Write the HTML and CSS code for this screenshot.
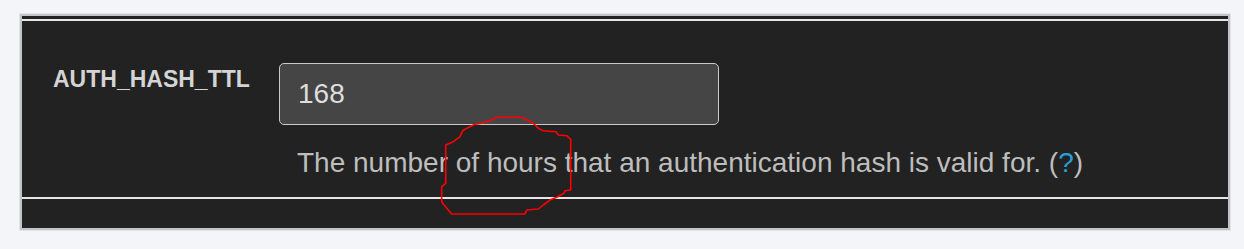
FILE: index.html
```html
<!DOCTYPE html>
<html lang="en">
<head>
<meta charset="utf-8">
<title>AUTH_HASH_TTL</title>
<link rel="stylesheet" href="styles.css">
</head>
<body>
<div class="panel">
  <div class="row">
    <label class="label" for="ttl">AUTH_HASH_TTL</label>
    <div class="field">
      <input id="ttl" class="input" type="text" value="168">
      <p class="help">The number of hours that an authentication hash is valid for. (<a class="link" href="#">?</a>)</p>
    </div>
  </div>
</div>
<svg class="scribble" viewBox="0 0 1244 249" width="1244" height="249" aria-hidden="true">
  <path d="M497 117.3 L521.7 117.3 L533.3 123.3 L538.3 128.3 L543.3 130.7 L556 131.7 L558.3 135 L566.7 135.7 L570.7 139.3 L570.7 190 L565 190.7 L564 193.3 L556.7 197.3 L550 200 L543.3 205 L538.3 209 L526.7 210 L525 214 L451.7 214 L448.3 210 L443.3 204 L441.7 201.7 L441.7 186.7 L445.7 183.3 L445.7 145 L453.3 141.7 L460 136.7 L462.7 130.7 L466.7 128.3 L475 124.3 L481.7 123.3 L491.7 120 Z" fill="none" stroke="#ff0000" stroke-width="1.6" stroke-linejoin="round"/>
</svg>
</body>
</html>
```
FILE: styles.css
```css
html, body {
  margin: 0;
  padding: 0;
}
body {
  background: #f4f5f9;
  width: 1244px;
  height: 249px;
  position: relative;
  overflow: hidden;
  font-family: "Liberation Sans", Arial, sans-serif;
}
.panel {
  margin: 14px 14px 0 20px;
  border: 2px solid #c4c4c4;
  box-shadow: 0 0 0 1px #e3e4e8;
  background: #222222;
  padding: 3px 0 29px 0;
}
.row {
  display: flex;
  align-items: flex-start;
  border-top: 2px solid #e6e6e6;
  border-bottom: 2px solid #e6e6e6;
  padding: 42px 0 18px 31px;
}
.label {
  width: 226px;
  flex: none;
  margin-top: 3px;
  font-weight: bold;
  font-size: 23px;
  color: #d4d4d4;
  white-space: nowrap;
}
.field {
  display: flex;
  flex-direction: column;
}
.input {
  box-sizing: border-box;
  width: 440px;
  height: 62px;
  margin: 0;
  padding: 0 18px;
  border: 1.5px solid #c9c9c9;
  border-radius: 5px;
  background: #454545;
  color: #dedede;
  font-family: "Liberation Sans", Arial, sans-serif;
  font-size: 28px;
  outline: none;
}
.help {
  margin: 22px 0 0 18px;
  font-size: 28px;
  color: #bdbdbd;
  white-space: nowrap;
}
.link {
  color: #2a9fd6;
  text-decoration: none;
}
.scribble {
  position: absolute;
  left: 0;
  top: 0;
  pointer-events: none;
}
```
